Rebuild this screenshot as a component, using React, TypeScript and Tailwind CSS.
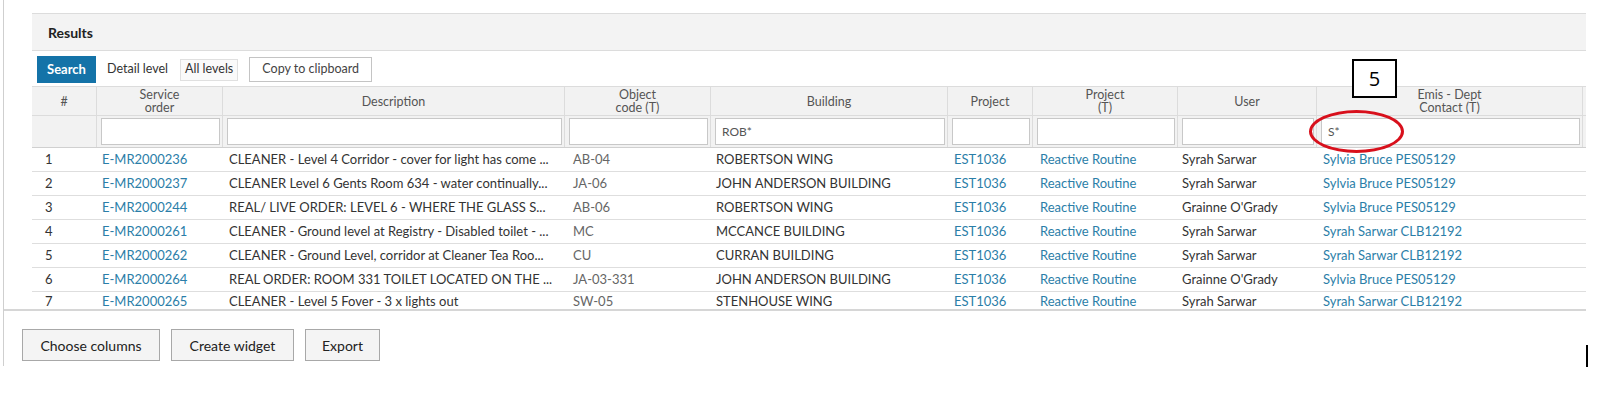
import React from 'react';

type Row = {
  n: number;
  order: string;
  desc: string;
  code: string;
  building: string;
  user: string;
  contact: string;
};

const rows: Row[] = [
  { n: 1, order: 'E-MR2000236', desc: 'CLEANER - Level 4 Corridor - cover for light has come ...', code: 'AB-04', building: 'ROBERTSON WING', user: 'Syrah Sarwar', contact: 'Sylvia Bruce PES05129' },
  { n: 2, order: 'E-MR2000237', desc: 'CLEANER Level 6 Gents Room 634 - water continually...', code: 'JA-06', building: 'JOHN ANDERSON BUILDING', user: 'Syrah Sarwar', contact: 'Sylvia Bruce PES05129' },
  { n: 3, order: 'E-MR2000244', desc: 'REAL/ LIVE ORDER: LEVEL 6 - WHERE THE GLASS S...', code: 'AB-06', building: 'ROBERTSON WING', user: "Grainne O'Grady", contact: 'Sylvia Bruce PES05129' },
  { n: 4, order: 'E-MR2000261', desc: 'CLEANER - Ground level at Registry - Disabled toilet - ...', code: 'MC', building: 'MCCANCE BUILDING', user: 'Syrah Sarwar', contact: 'Syrah Sarwar CLB12192' },
  { n: 5, order: 'E-MR2000262', desc: 'CLEANER - Ground Level, corridor at Cleaner Tea Roo...', code: 'CU', building: 'CURRAN BUILDING', user: 'Syrah Sarwar', contact: 'Syrah Sarwar CLB12192' },
  { n: 6, order: 'E-MR2000264', desc: 'REAL ORDER: ROOM 331 TOILET LOCATED ON THE ...', code: 'JA-03-331', building: 'JOHN ANDERSON BUILDING', user: "Grainne O'Grady", contact: 'Sylvia Bruce PES05129' },
  { n: 7, order: 'E-MR2000265', desc: 'CLEANER - Level 5 Fover - 3 x lights out', code: 'SW-05', building: 'STENHOUSE WING', user: 'Syrah Sarwar', contact: 'Syrah Sarwar CLB12192' },
];

const cols = 'grid grid-cols-[65px_126px_342px_146px_237px_85px_145px_139px_266px]';

const headers: string[][] = [
  ['#'],
  ['Service', 'order'],
  ['Description'],
  ['Object', 'code (T)'],
  ['Building'],
  ['Project'],
  ['Project', '(T)'],
  ['User'],
  ['Emis - Dept', 'Contact (T)'],
];

const filters = ['', '', '', '', 'ROB*', '', '', '', 'S*'];

export default function App() {
  return (
    <div className="relative h-[393px] w-[1600px] overflow-hidden bg-white pl-[3px] font-['Lato','Noto_Sans',sans-serif] text-[13px] text-[#333]">
      <div className="h-[366px] border-l border-[#cfcfcf]">
        {/* Results panel */}
        <div className="w-[1582px] border-b-2 border-[#d6d6d6] pt-[13px]">
          <div className="ml-[28px] w-[1554px]">
            <div className="flex h-[38px] items-center border-y border-[#dcdcdc] bg-[#f3f3f3] pl-[16px] text-[14px] font-bold text-[#222]">
              Results
            </div>
            <div className="flex h-[35px] items-center gap-[11px] pl-[5px] pt-[2px]">
              <button className="h-[27px] w-[59px] bg-[#1473a8] text-[13px] font-bold text-white">Search</button>
              <span className="text-[12.5px] text-[#333]">Detail level</span>
              <span className="ml-[1px] flex h-[22px] items-center border border-[#e0e0e0] bg-[#fafafa] px-[4px] text-[12.5px]">All levels</span>
              <button className="h-[25px] w-[123px] border border-[#c4c4c4] bg-white text-[12.5px] text-[#444]">Copy to clipboard</button>
            </div>

            <div className="flex h-[223px] flex-col">
              <div className={`${cols} h-[30px] shrink-0 border-y border-[#dcdcdc] bg-[#f2f2f2] text-[12.5px] leading-[13px] text-[#555]`}>
                {headers.map((h, i) => (
                  <div key={i} className="flex flex-col items-center justify-center border-r border-[#dcdcdc] text-center">
                    {h.map((l) => (
                      <span key={l}>{l}</span>
                    ))}
                  </div>
                ))}
              </div>
              <div className={`${cols} h-[32px] shrink-0 border-b border-[#d0d0d0] bg-[#f2f2f2]`}>
                {filters.map((f, i) => (
                  <div key={i} className="flex items-center border-r border-[#dcdcdc] pl-[4px] pr-[2px]">
                    {i > 0 && (
                      <div className="flex h-[27px] w-full items-center border border-[#c8c8c8] bg-white pl-[6px] text-[12px] text-[#555]">
                        {f}
                      </div>
                    )}
                  </div>
                ))}
              </div>
              {rows.map((r, idx) => {
                const last = idx === rows.length - 1;
                return (
                  <div
                    key={r.n}
                    className={`${cols} items-center whitespace-nowrap ${last ? 'h-[17px] leading-[16px]' : 'h-[24px] shrink-0 border-b border-[#dedede]'}`}
                  >
                    <span className="pl-[13px]">{r.n}</span>
                    <span className="pl-[5px] text-[#2b7ea8]">{r.order}</span>
                    <span className="overflow-hidden pl-[6px]">{r.desc}</span>
                    <span className="pl-[8px] text-[#666]">{r.code}</span>
                    <span className="pl-[5px]">{r.building}</span>
                    <span className="pl-[6px] text-[#2b7ea8]">EST1036</span>
                    <span className="pl-[7px] text-[#2b7ea8]">Reactive Routine</span>
                    <span className="pl-[4px]">{r.user}</span>
                    <span className="pl-[6px] text-[#2b7ea8]">{r.contact}</span>
                  </div>
                );
              })}
            </div>
          </div>
        </div>

        {/* Footer buttons */}
        <div className="flex gap-[11px] pl-[18px] pt-[18px]">
          <button className="h-[32px] w-[138px] border border-[#a8a8a8] bg-[#f4f4f4] text-[14px] text-[#222]">Choose columns</button>
          <button className="h-[32px] w-[123px] border border-[#a8a8a8] bg-[#f4f4f4] text-[14px] text-[#222]">Create widget</button>
          <button className="h-[32px] w-[75px] border border-[#a8a8a8] bg-[#f4f4f4] text-[14px] text-[#222]">Export</button>
        </div>
      </div>

      {/* Annotation overlays */}
      <div className="absolute left-[1352px] top-[59px] flex h-[39px] w-[45px] items-center justify-center border-2 border-black bg-white font-['Open_Sans',sans-serif] text-[20px] text-black">
        5
      </div>
      <div className="absolute left-[1309px] top-[110px] h-[43px] w-[95px] rounded-[50%] border-[3px] border-[#d8101c]" />
      <div className="absolute left-[1586px] top-[345px] h-[22px] w-[2px] bg-black" />
    </div>
  );
}
